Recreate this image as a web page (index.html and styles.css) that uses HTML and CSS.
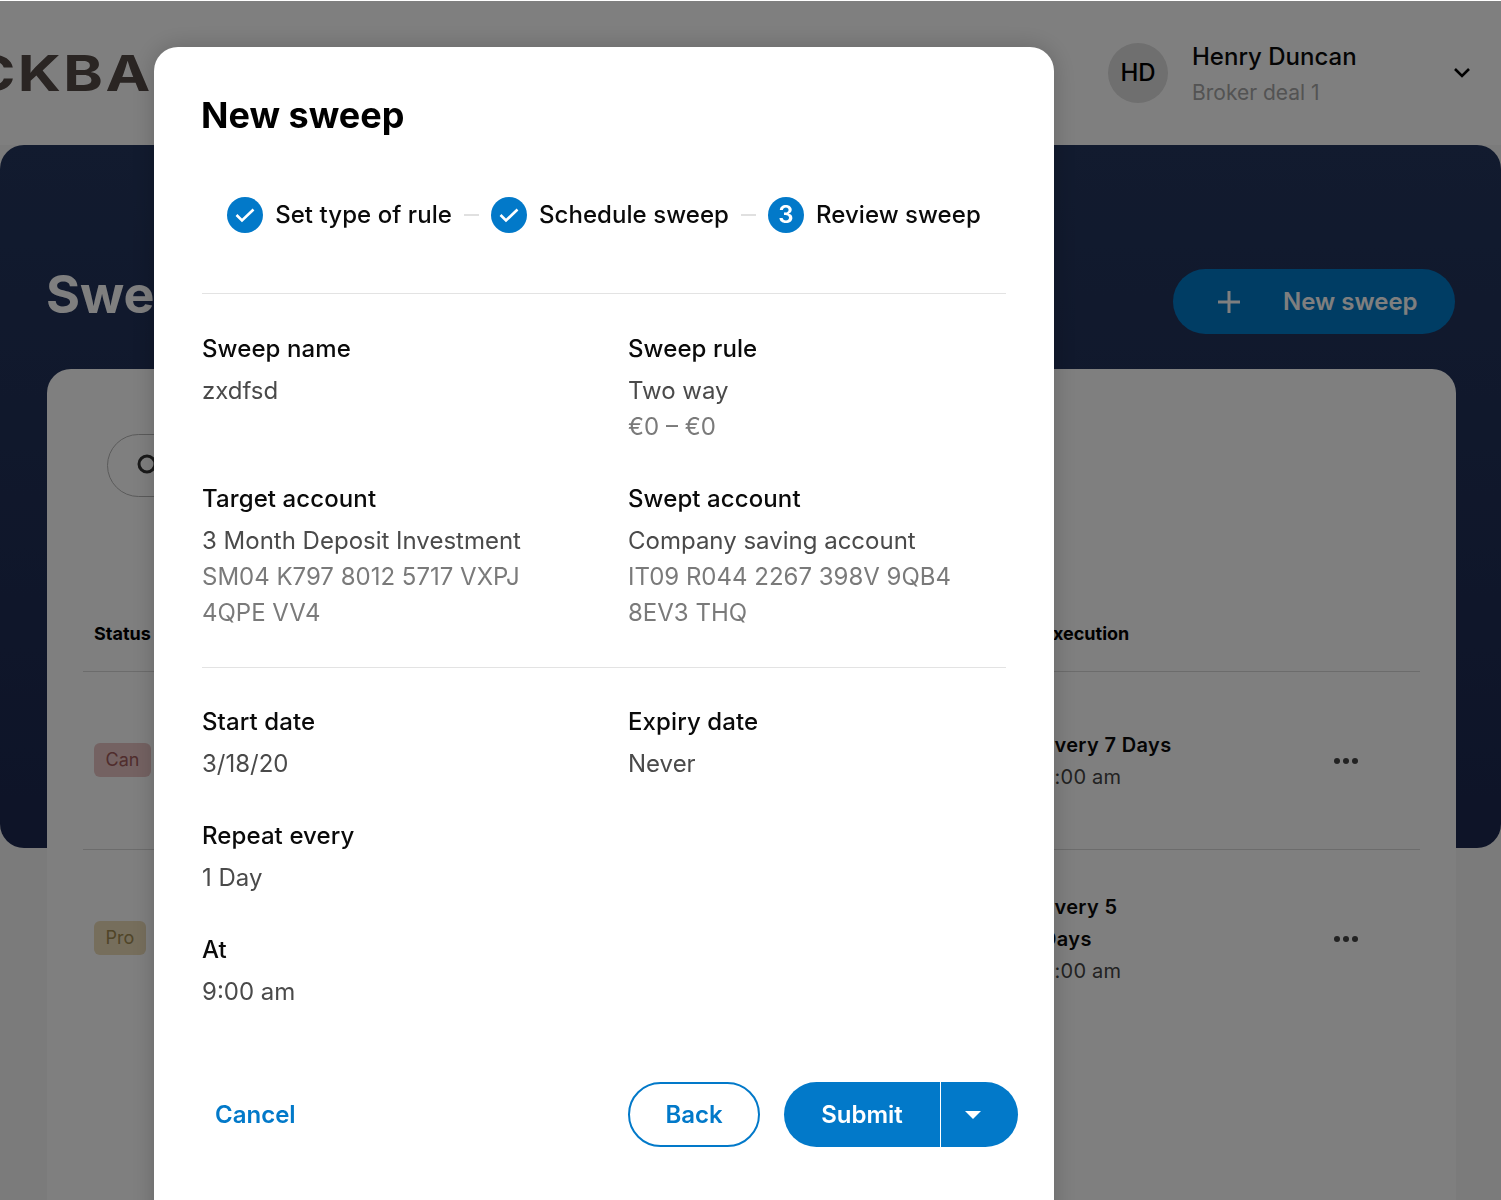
FILE: index.html

```html
<!DOCTYPE html>
<html lang="en">
<head>
    <meta charset="UTF-8">
    <title>New sweep</title>
    <link rel="stylesheet" href="styles.css">
</head>
<body>
    <div class="page">
        <header class="topbar">
            <div class="logo">CKBA</div>
            <div class="user">
                <div class="avatar">HD</div>
                <div class="user-info">
                    <div class="user-name">Henry Duncan</div>
                    <div class="user-role">Broker deal 1</div>
                </div>
                <svg class="user-chevron" width="18" height="12" viewBox="0 0 18 12"><path d="M2 2l7 7 7-7" fill="none" stroke="#000" stroke-width="2.6"/></svg>
            </div>
        </header>
        <main class="hero">
            <div class="hero-head">
                <h1 class="hero-title">Sweeps</h1>
                <button class="new-button">
                    <svg width="24" height="24" viewBox="0 0 24 24"><path d="M12 1v22M1 12h22" stroke="#fff" stroke-width="3"/></svg>
                    <span>New sweep</span>
                </button>
            </div>
            <section class="card">
                <div class="search">
                    <svg width="24" height="24" viewBox="0 0 24 24"><circle cx="11" cy="11" r="8" fill="none" stroke="#333" stroke-width="3"/></svg>
                </div>
                <div class="table">
                    <div class="table-row table-head">
                        <div>Status</div>
                        <div>Execution</div>
                        <div></div>
                    </div>
                    <div class="table-row">
                        <div><span class="badge badge-cancelled">Can</span></div>
                        <div><b>Every 7 Days</b><br>9:00 am</div>
                        <div class="dots"><i></i><i></i><i></i></div>
                    </div>
                    <div class="table-row table-row-last">
                        <div><span class="badge badge-pending">Pro</span></div>
                        <div><b>Every 5<br>Days</b><br>9:00 am</div>
                        <div class="dots"><i></i><i></i><i></i></div>
                    </div>
                </div>
            </section>
        </main>
    </div>

    <div class="overlay">
        <div class="modal">
            <h2 class="modal-title">New sweep</h2>
            <div class="steps">
                <div class="step">
                    <span class="step-icon"><svg width="20" height="20" viewBox="0 0 20 20"><path d="M1.5 10L7 15.5 18.5 4.5" fill="none" stroke="#fff" stroke-width="2.6"/></svg></span>
                    Set type of rule
                </div>
                <div class="step-dash"></div>
                <div class="step">
                    <span class="step-icon"><svg width="20" height="20" viewBox="0 0 20 20"><path d="M1.5 10L7 15.5 18.5 4.5" fill="none" stroke="#fff" stroke-width="2.6"/></svg></span>
                    Schedule sweep
                </div>
                <div class="step-dash"></div>
                <div class="step">
                    <span class="step-icon">3</span>
                    Review sweep
                </div>
            </div>

            <div class="details details-first">
                <div class="field">
                    <div class="field-label">Sweep name</div>
                    <div class="field-value">zxdfsd</div>
                </div>
                <div class="field">
                    <div class="field-label">Sweep rule</div>
                    <div class="field-value">Two way</div>
                    <div class="field-sub">€0 – €0</div>
                </div>
                <div class="field">
                    <div class="field-label">Target account</div>
                    <div class="field-value">3 Month Deposit Investment</div>
                    <div class="field-sub">SM04 K797 8012 5717 VXPJ 4QPE VV4</div>
                </div>
                <div class="field">
                    <div class="field-label">Swept account</div>
                    <div class="field-value">Company saving account</div>
                    <div class="field-sub">IT09 R044 2267 398V 9QB4 8EV3 THQ</div>
                </div>
            </div>

            <div class="details">
                <div class="field">
                    <div class="field-label">Start date</div>
                    <div class="field-value">3/18/20</div>
                </div>
                <div class="field">
                    <div class="field-label">Expiry date</div>
                    <div class="field-value">Never</div>
                </div>
                <div class="field field-wide">
                    <div class="field-label">Repeat every</div>
                    <div class="field-value">1 Day</div>
                </div>
                <div class="field field-wide">
                    <div class="field-label">At</div>
                    <div class="field-value">9:00 am</div>
                </div>
            </div>

            <div class="modal-footer">
                <button class="btn btn-link">Cancel</button>
                <div class="footer-right">
                    <button class="btn btn-outline">Back</button>
                    <div class="split">
                        <button class="btn btn-primary">Submit</button>
                        <button class="btn btn-caret"><span class="caret"></span></button>
                    </div>
                </div>
            </div>
        </div>
    </div>
</body>
</html>
```

FILE: styles.css

```css
html, body {
    margin: 0;
    padding: 0;
    height: 1200px;
    overflow: hidden;
}
body {
    font-family: "Inter", "Liberation Sans", sans-serif;
    background-color: #f6f6f6;
    color: #000;
}
button {
    font-family: inherit;
    cursor: pointer;
}

/* page behind the dialog */
.page {
    height: 1200px;
    overflow: hidden;
}
.topbar {
    height: 145px;
    background-color: #fff;
    display: flex;
    justify-content: space-between;
    align-items: center;
    padding-right: 30px;
    box-sizing: border-box;
    overflow: hidden;
}
.logo {
    margin-left: -29px;
    font-size: 50px;
    font-weight: 700;
    letter-spacing: 2px;
    color: #544a46;
    transform: scaleX(1.2);
    transform-origin: left center;
}
.user {
    display: flex;
    align-items: center;
}
.avatar {
    width: 60px;
    height: 60px;
    border-radius: 50%;
    background-color: #dedede;
    display: flex;
    justify-content: center;
    align-items: center;
    font-size: 24px;
    font-weight: 500;
}
.user-info {
    margin-left: 24px;
    width: 261px;
    padding-top: 4px;
}
.user-name {
    font-size: 24px;
    font-weight: 500;
    line-height: 36px;
    color: #0a0a0a;
}
.user-role {
    font-size: 21px;
    line-height: 36px;
    color: #a6a6a6;
}
.hero {
    height: 703px;
    padding: 124px 46px 0 47px;
    box-sizing: border-box;
    border-radius: 24px;
    background: linear-gradient(#24365e, #1c2850);
}
.hero-head {
    display: flex;
    justify-content: space-between;
    align-items: center;
    height: 65px;
    margin-bottom: 35px;
}
.hero-title {
    margin: 0 0 14px -1px;
    font-size: 52px;
    font-weight: 700;
    color: #fff;
}
.new-button {
    width: 282px;
    height: 65px;
    border: none;
    border-radius: 33px;
    background-color: #007ac9;
    color: #fff;
    font-size: 24px;
    font-weight: 600;
    display: flex;
    align-items: center;
    gap: 42px;
    padding: 0 0 0 44px;
}
.card {
    height: 840px;
    margin-right: -1px;
    background-color: #fff;
    border-radius: 24px;
    padding: 65px 36px 0;
}
.search {
    width: 300px;
    height: 63px;
    margin-left: 24px;
    box-sizing: border-box;
    border: 1px solid #b5b5b5;
    border-radius: 32px;
    padding: 18px 28px;
}
.table {
    margin-top: 100px;
}
.table-row {
    display: grid;
    grid-template-columns: 948px 292px 1fr;
    align-items: center;
    padding-left: 11px;
    height: 178px;
    box-sizing: border-box;
    border-bottom: 1px solid #d8d8d8;
    font-size: 20px;
    line-height: 32px;
    letter-spacing: 0.2px;
    color: #444;
}
.table-row b {
    font-weight: 600;
    letter-spacing: 0.35px;
    color: #0a0a0a;
}
.table-head {
    height: 75px;
    font-size: 18px;
    font-weight: 700;
    letter-spacing: 0;
    color: #000;
}
.table-row-last {
    border-bottom: none;
}
.badge {
    display: inline-block;
    margin-bottom: 2px;
    padding: 0 11.5px;
    border-radius: 6px;
    font-size: 18px;
    line-height: 34px;
    letter-spacing: 0;
}
.badge-cancelled {
    background-color: #e8c4c4;
    color: #a05a5a;
}
.badge-pending {
    background-color: #ecdcb8;
    color: #a08a50;
}
.dots {
    display: flex;
    gap: 3px;
}
.dots i {
    width: 6px;
    height: 6px;
    border-radius: 50%;
    background-color: #444;
}

/* dialog */
.overlay {
    position: fixed;
    top: 1px;
    left: 0;
    right: 0;
    bottom: 0;
    background-color: rgba(0, 0, 0, 0.5);
    overflow: hidden;
}
.modal {
    width: 900px;
    height: 1200px;
    margin: 46px 0 0 154px;
    padding: 48px 48px 0;
    box-sizing: border-box;
    background-color: #fff;
    border-radius: 24px;
    box-shadow: 0 0 24px rgba(0, 0, 0, 0.2);
}
.modal-title {
    margin: 0 0 0 -1px;
    font-size: 36px;
    line-height: 40px;
    font-weight: 700;
}
.steps {
    display: flex;
    justify-content: center;
    align-items: center;
    gap: 12px;
    margin-top: 62px;
    padding-bottom: 60px;
    border-bottom: 1px solid #e3e3e3;
}
.step {
    display: flex;
    align-items: center;
    gap: 12px;
    font-size: 24px;
    font-weight: 550;
    letter-spacing: 0.06px;
    line-height: 36px;
    color: #0a0a0a;
}
.step-icon {
    width: 36px;
    height: 36px;
    border-radius: 50%;
    background-color: #0279c9;
    color: #fff;
    font-weight: 600;
    display: flex;
    justify-content: center;
    align-items: center;
}
.step-dash {
    width: 15px;
    height: 2px;
    background-color: #e0e0e0;
}
.details {
    display: grid;
    grid-template-columns: 378px 378px;
    gap: 36px 48px;
    padding-top: 36px;
}
.details-first {
    padding-top: 37px;
    padding-bottom: 36px;
    border-bottom: 1px solid #e3e3e3;
}
.field-wide {
    grid-column: 1 / -1;
}
.field-label {
    font-size: 24px;
    font-weight: 550;
    letter-spacing: 0.1px;
    line-height: 36px;
    margin-bottom: 6px;
    color: #0a0a0a;
}
.field-value {
    font-size: 24px;
    line-height: 36px;
    color: #4a4a4a;
}
.field-sub {
    font-size: 24px;
    line-height: 36px;
    color: #7a7a7a;
}
.modal-footer {
    display: flex;
    justify-content: space-between;
    align-items: center;
    margin: 72px -12px 0 0;
}
.footer-right {
    display: flex;
    gap: 24px;
}
.btn {
    height: 65px;
    border: none;
    font-size: 24px;
    font-weight: 600;
    background: none;
    padding: 0;
}
.btn-link {
    padding: 0 13px;
    color: #0279c9;
}
.btn-outline {
    width: 132px;
    border: 2px solid #0279c9;
    border-radius: 33px;
    color: #0279c9;
}
.split {
    display: flex;
}
.btn-primary {
    width: 157px;
    background-color: #0279c9;
    color: #fff;
    border-radius: 33px 0 0 33px;
    border-right: 1px solid #fff;
}
.btn-caret {
    width: 77px;
    background-color: #0279c9;
    border-radius: 0 33px 33px 0;
    display: flex;
    justify-content: center;
    align-items: center;
}
.caret {
    margin-right: 13px;
    border-top: 8px solid #fff;
    border-left: 8px solid transparent;
    border-right: 8px solid transparent;
}
```
